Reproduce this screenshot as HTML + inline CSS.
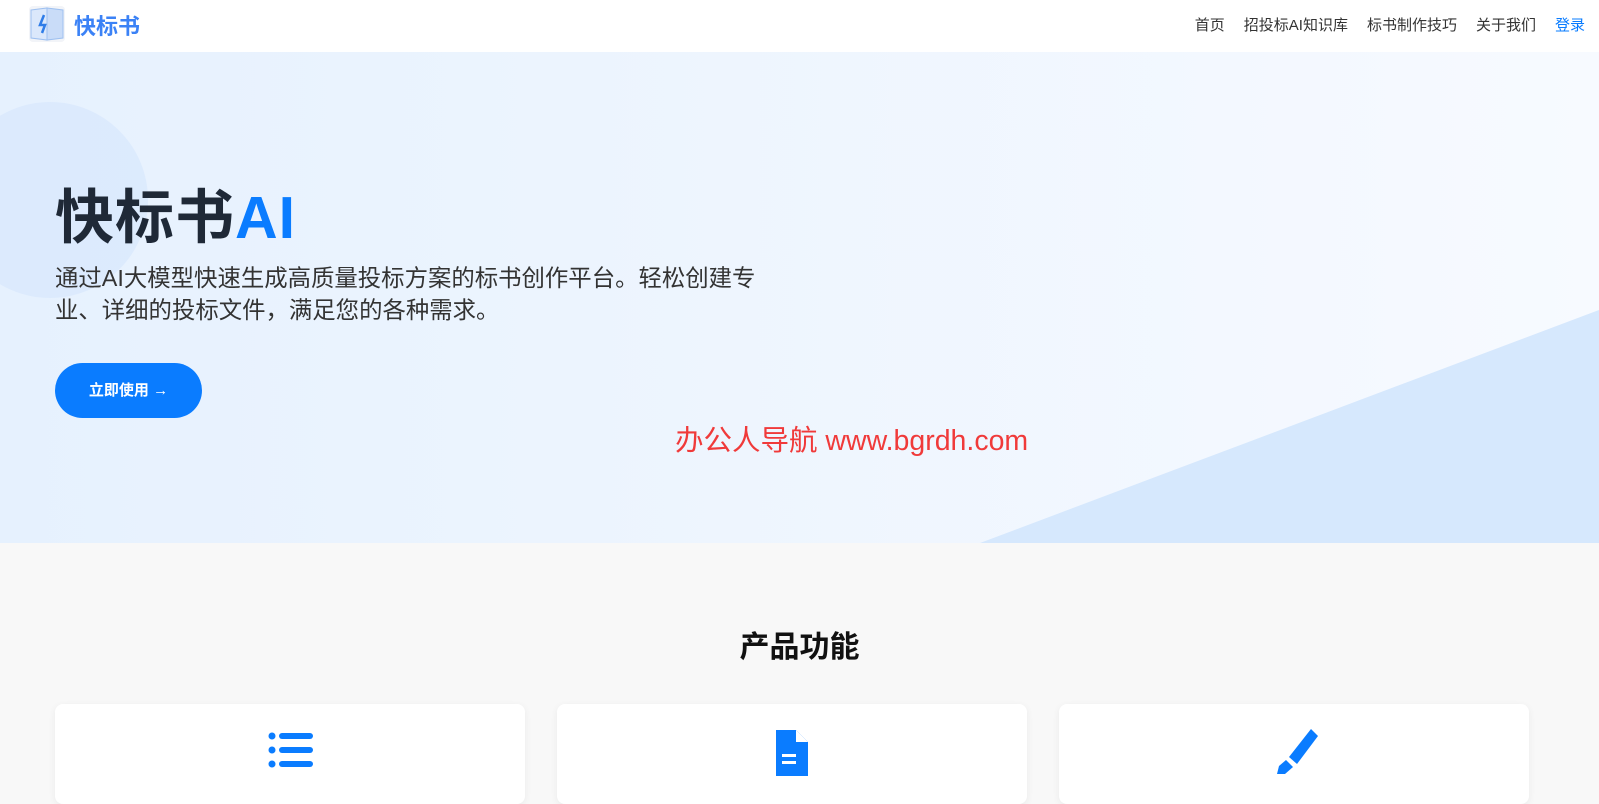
<!DOCTYPE html>
<html><head><meta charset="utf-8"><style>
*{margin:0;padding:0;box-sizing:border-box}
body{width:1599px;height:779px;overflow:hidden;font-family:"Liberation Sans","Noto Sans CJK SC",sans-serif;background:#f8f8f8;position:relative}
.hdr{position:absolute;top:0;left:0;right:0;height:52px;background:#fff}
.logo{position:absolute;left:74px;top:9px;font-size:22px;font-weight:bold;color:#3b82f6}
.nav{position:absolute;right:14px;top:14px;font-size:15px;color:#333}
.nav span{margin-left:19px}
.hero{position:absolute;top:52px;left:0;width:1599px;height:491px;background:linear-gradient(90deg,#e6f1fe,#f7faff);overflow:hidden}
.circ{position:absolute;left:-48px;top:50px;width:196px;height:196px;border-radius:50%;background:#d9e9fd;opacity:.8}
h1{position:absolute;left:55px;top:118px;font-size:59px;font-weight:bold;color:#1f2937;letter-spacing:1px}
h1 b{color:#0a7cff}
.sub{position:absolute;left:55px;top:210px;width:780px;font-size:23.4px;line-height:32px;color:#333;white-space:nowrap}
.btn{position:absolute;left:55px;top:311px;width:147px;height:55px;border-radius:28px;background:#0a7cff;color:#fff;font-weight:bold;font-size:15px;line-height:55px;text-align:center}
.wm{position:absolute;left:675px;top:366px;font-size:28.5px;color:#f03a3a}
.sec{position:absolute;top:622px;left:0;width:1599px;text-align:center;font-size:30px;font-weight:bold;color:#111}
.card{position:absolute;top:704px;width:470px;height:100px;background:#fff;border-radius:8px;box-shadow:0 2px 8px rgba(0,0,0,.06)}
</style></head><body>
<div class="hdr">
<svg style="position:absolute;left:28px;top:5px" width="38" height="38" viewBox="0 0 38 38"><rect x="1" y="1" width="36" height="36" rx="4" fill="#f2f4f8"/><path d="M3 5 L19 3 L19 35 L3 33Z" fill="#dbe8fb" stroke="#9ec0f0"/><path d="M19 3 L35 5 L35 33 L19 35Z" fill="#c9dcf8" stroke="#9ec0f0"/><path d="M16 10 L12 20 L17 20 L14 28" stroke="#2f7de8" stroke-width="2.5" fill="none"/></svg>
<div class="logo">快标书</div>
<div class="nav"><span>首页</span><span>招投标AI知识库</span><span>标书制作技巧</span><span>关于我们</span><span style="color:#0a7cff">登录</span></div>
</div>
<div class="hero">
<div class="circ"></div>
<svg style="position:absolute;left:0;top:0" width="1599" height="491"><polygon points="980,491 1599,258 1599,491" fill="#d6e8fd"/></svg>
<h1>快标书<b>AI</b></h1>
<div class="sub">通过AI大模型快速生成高质量投标方案的标书创作平台。轻松创建专<br>业、详细的投标文件，满足您的各种需求。</div>
<div class="btn">立即使用 →</div>
<div class="wm">办公人导航 www.bgrdh.com</div>
</div>
<div class="sec">产品功能</div>
<div class="card" style="left:55px"><svg style="position:absolute;left:212px;top:28px" width="48" height="40"><circle cx="5" cy="4" r="3.5" fill="#0a7cff"/><rect x="12" y="1" width="34" height="6" rx="3" fill="#0a7cff"/><circle cx="5" cy="18" r="3.5" fill="#0a7cff"/><rect x="12" y="15" width="34" height="6" rx="3" fill="#0a7cff"/><circle cx="5" cy="32" r="3.5" fill="#0a7cff"/><rect x="12" y="29" width="34" height="6" rx="3" fill="#0a7cff"/></svg></div>
<div class="card" style="left:557px"><svg style="position:absolute;left:217px;top:24px" width="36" height="50"><path d="M2 2 H22 L34 14 V48 H2Z" fill="#0a7cff"/><path d="M22 2 V14 H34" fill="#fff"/><rect x="8" y="26" width="14" height="3" fill="#fff"/><rect x="8" y="33" width="14" height="3" fill="#fff"/></svg></div>
<div class="card" style="left:1059px"><svg style="position:absolute;left:212px;top:22px" width="50" height="50"><path d="M40 3 L47 10 L26 38 L18 31Z" fill="#0a7cff"/><path d="M15 34 L22 41 L14 48 L6 48 L8 40Z" fill="#0a7cff"/></svg></div>
</body></html>
